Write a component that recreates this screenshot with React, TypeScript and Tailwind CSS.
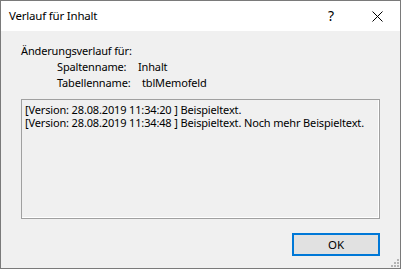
import React from "react";

export default function App() {
  const font = { fontFamily: '"Noto Sans", "Open Sans", sans-serif' };
  return (
    <div
      className="w-[401px] h-[269px] border border-[#7a7a7a] bg-[#f0f0f0] flex flex-col text-[11px] tracking-[-0.15px] text-black relative overflow-hidden"
      style={font}
    >
      <div className="h-[30px] bg-white flex items-center pl-[8px] shrink-0">
        <span className="flex-1 leading-none text-[11.5px] tracking-[-0.2px]">Verlauf für Inhalt</span>
        <span className="w-[46px] text-center text-[14px] leading-none">?</span>
        <span className="w-[46px] flex items-center justify-center">
          <svg width="11" height="11" viewBox="0 0 11 11">
            <path d="M0.5 0.5 L10.5 10.5 M10.5 0.5 L0.5 10.5" stroke="#000" strokeWidth="1" />
          </svg>
        </span>
      </div>
      <div className="flex flex-col pl-[20px] pr-[20px] pt-[12px] leading-[16px]">
        <div>Änderungsverlauf für:</div>
        <div className="pl-[36px] flex">
          <span className="w-[81px]">Spaltenname:</span>
          <span>Inhalt</span>
        </div>
        <div className="pl-[36px] flex">
          <span className="w-[85px]">Tabellenname:</span>
          <span>tblMemofeld</span>
        </div>
      </div>
      <div className="mx-[20px] mt-[8px] h-[120px] border border-[#a0a0a0] shadow-[inset_-1px_-1px_0_#ffffff] px-[3px] pt-[3px] leading-[13px]">
        <div className="whitespace-nowrap">[Version: 28.08.2019 11:34:20 ] Beispieltext.</div>
        <div className="whitespace-nowrap">[Version: 28.08.2019 11:34:48 ] Beispieltext. Noch mehr Beispieltext.</div>
      </div>
      <div className="flex justify-end pr-[20px] pt-[14px]">
        <button className="w-[88px] h-[23px] border-2 border-[#0078d7] bg-[#e1e1e1] leading-none text-[11.5px]">
          OK
        </button>
      </div>
      <svg className="absolute right-[1px] bottom-[1px]" width="10" height="10" viewBox="0 0 10 10">
        {[
          [8, 2], [8, 5], [5, 5], [8, 8], [5, 8], [2, 8],
        ].map(([x, y], i) => (
          <rect key={i} x={x} y={y} width="2" height="2" fill="#b4b4b4" />
        ))}
      </svg>
    </div>
  );
}
